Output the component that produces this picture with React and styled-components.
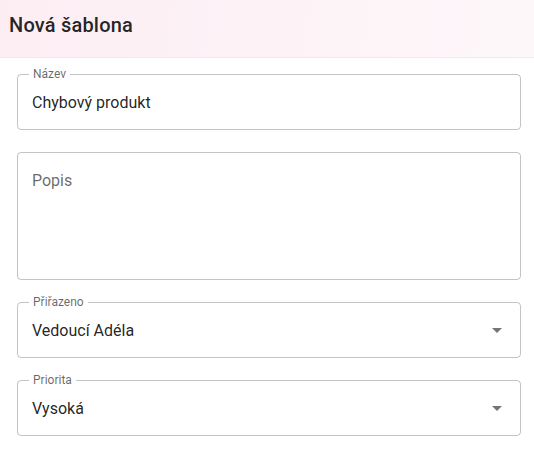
import React from "react";
import styled, { createGlobalStyle } from "styled-components";

const GlobalStyle = createGlobalStyle`
  body {
    margin: 0;
    background: #ffffff;
    font-family: Roboto, "Noto Sans", Arial, sans-serif;
  }
`;

const Dialog = styled.div`
  width: 534px;
  min-height: 463px;
  background: #ffffff;
`;

const Header = styled.div`
  box-sizing: border-box;
  height: 58px;
  padding: 13px 9px 0;
  background: linear-gradient(100deg, #fcedf3 0%, #fdf3f7 50%, #fdf7fa 100%);
  border-bottom: 1px solid #ececec;
`;

const Title = styled.h2`
  margin: 0;
  font-size: 20px;
  font-weight: 500;
  line-height: 24px;
  letter-spacing: 0.2px;
  color: rgba(0, 0, 0, 0.87);
`;

const Content = styled.div`
  display: flex;
  flex-direction: column;
  gap: 22px;
  padding: 16px 13px 0 17px;
`;

const Field = styled.div`
  position: relative;
  box-sizing: border-box;
  display: flex;
  align-items: ${p => (p.$multiline ? "flex-start" : "center")};
  height: ${p => p.$height || 56}px;
  padding: ${p => (p.$multiline ? "15.5px 14px" : "0 11px 0 14px")};
  border: 1px solid rgba(0, 0, 0, 0.23);
  border-radius: 4px;
`;

const Label = styled.span`
  position: absolute;
  top: -7px;
  left: 11px;
  padding: 0 4px;
  background: #ffffff;
  font-size: 12px;
  line-height: 12px;
  color: rgba(0, 0, 0, 0.6);
`;

const Value = styled.span`
  flex: 1;
  font-size: 16px;
  line-height: 23px;
  color: ${p => (p.$placeholder ? "rgba(0, 0, 0, 0.6)" : "rgba(0, 0, 0, 0.87)")};
`;

const Arrow = styled.svg`
  display: block;
  width: 24px;
  height: 24px;
  fill: rgba(0, 0, 0, 0.54);
`;

const DropIcon = () => (
  <Arrow viewBox="0 0 24 24">
    <path d="M7 10l5 5 5-5z" />
  </Arrow>
);

const TextField = ({ label, value }) => (
  <Field>
    <Label>{label}</Label>
    <Value>{value}</Value>
  </Field>
);

const SelectField = ({ label, value }) => (
  <Field>
    <Label>{label}</Label>
    <Value>{value}</Value>
    <DropIcon />
  </Field>
);

export default function App() {
  return (
    <>
      <GlobalStyle />
      <Dialog>
        <Header>
          <Title>Nová šablona</Title>
        </Header>
        <Content>
          <TextField label="Název" value="Chybový produkt" />
          <Field $multiline $height={128}>
            <Value $placeholder>Popis</Value>
          </Field>
          <SelectField label="Přiřazeno" value="Vedoucí Adéla" />
          <SelectField label="Priorita" value="Vysoká" />
        </Content>
      </Dialog>
    </>
  );
}
